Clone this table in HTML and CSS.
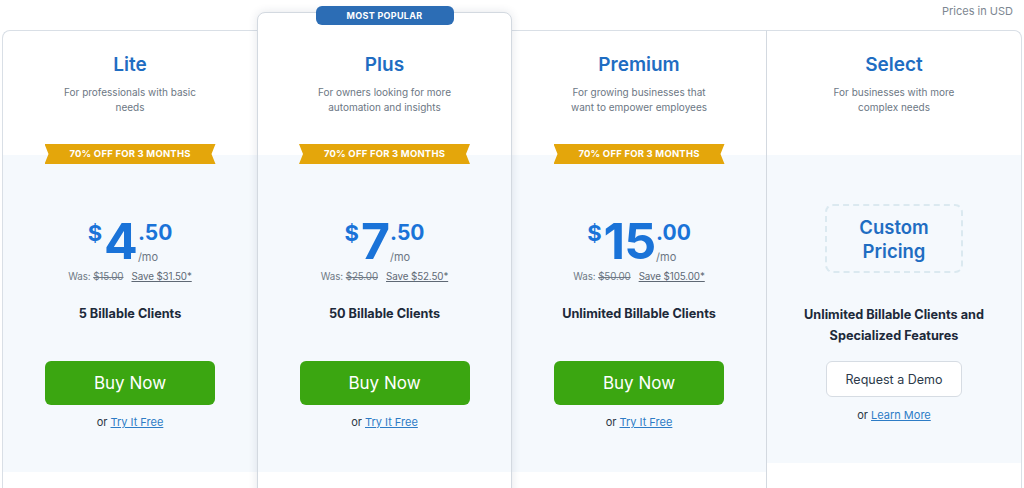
FILE: index.html
```html
<!DOCTYPE html>
<html lang="en">
<head>
<meta charset="utf-8">
<title>Pricing</title>
<link rel="stylesheet" href="styles.css">
</head>
<body>
<div class="page">
  <div class="currency">Prices in USD</div>
  <div class="plans">
    <section class="plan plan-lite">
      <header class="plan-head">
        <h2 class="plan-name">Lite</h2>
        <p class="plan-desc">For professionals with basic<br>needs</p>
      </header>
      <div class="plan-body">
        <div class="ribbon">70% OFF FOR 3 MONTHS</div>
        <div class="price">
          <span class="price-cur">$</span>
          <span class="price-int">4</span>
          <span class="price-side"><span class="price-dec">.50</span><span class="price-per">/mo</span></span>
        </div>
        <div class="was">Was: <s>$15.00</s><span class="save">Save $31.50*</span></div>
        <div class="clients">5 Billable Clients</div>
        <a class="btn-buy" href="#">Buy Now</a>
        <div class="alt">or <a href="#">Try It Free</a></div>
      </div>
      <div class="plan-foot"></div>
    </section>

    <section class="plan plan-popular">
      <div class="badge">MOST POPULAR</div>
      <header class="plan-head">
        <h2 class="plan-name">Plus</h2>
        <p class="plan-desc">For owners looking for more<br>automation and insights</p>
      </header>
      <div class="plan-body">
        <div class="ribbon">70% OFF FOR 3 MONTHS</div>
        <div class="price">
          <span class="price-cur">$</span>
          <span class="price-int">7</span>
          <span class="price-side"><span class="price-dec">.50</span><span class="price-per">/mo</span></span>
        </div>
        <div class="was">Was: <s>$25.00</s><span class="save">Save $52.50*</span></div>
        <div class="clients">50 Billable Clients</div>
        <a class="btn-buy" href="#">Buy Now</a>
        <div class="alt">or <a href="#">Try It Free</a></div>
      </div>
      <div class="plan-foot"></div>
    </section>

    <section class="plan plan-premium">
      <header class="plan-head">
        <h2 class="plan-name">Premium</h2>
        <p class="plan-desc">For growing businesses that<br>want to empower employees</p>
      </header>
      <div class="plan-body">
        <div class="ribbon">70% OFF FOR 3 MONTHS</div>
        <div class="price">
          <span class="price-cur">$</span>
          <span class="price-int">15</span>
          <span class="price-side"><span class="price-dec">.00</span><span class="price-per">/mo</span></span>
        </div>
        <div class="was">Was: <s>$50.00</s><span class="save">Save $105.00*</span></div>
        <div class="clients">Unlimited Billable Clients</div>
        <a class="btn-buy" href="#">Buy Now</a>
        <div class="alt">or <a href="#">Try It Free</a></div>
      </div>
      <div class="plan-foot"></div>
    </section>

    <section class="plan plan-select">
      <header class="plan-head">
        <h2 class="plan-name">Select</h2>
        <p class="plan-desc">For businesses with more<br>complex needs</p>
      </header>
      <div class="plan-body plan-body-select">
        <div class="custom">Custom<br>Pricing</div>
        <div class="features">Unlimited Billable Clients and<br>Specialized Features</div>
        <a class="btn-demo" href="#">Request a Demo</a>
        <div class="alt alt-select">or <a href="#">Learn More</a></div>
      </div>
      <div class="plan-foot"></div>
    </section>
  </div>
</div>
</body>
</html>
```

FILE: styles.css
```css
* { box-sizing: border-box; }

html, body {
  margin: 0;
  height: 488px;
  overflow: hidden;
  background: #fff;
}

body {
  font-family: Inter, "Liberation Sans", sans-serif;
  color: #1f2d3d;
}

.page { padding: 0 2px; }

.currency {
  height: 30px;
  line-height: 22px;
  text-align: right;
  padding-right: 9px;
  font-size: 11px;
  color: #7d8791;
}

.plans {
  display: grid;
  grid-template-columns: repeat(4, 1fr);
}

.plan {
  display: flex;
  flex-direction: column;
  border-top: 1px solid #d9dfe6;
  background: #fff;
}

.plan-lite {
  border-left: 1px solid #d9dfe6;
  border-top-left-radius: 8px;
}

.plan-popular {
  position: relative;
  z-index: 1;
  margin-top: -18px;
  padding-top: 18px;
  border: 1px solid #d3d9e0;
  border-radius: 8px 8px 0 0;
  box-shadow: 0 0 10px rgba(30, 50, 80, 0.12);
}

.plan-premium { border-right: 1px solid #d3d9e0; }

.plan-select {
  border-right: 1px solid #d9dfe6;
  border-top-right-radius: 8px;
}

.badge {
  position: absolute;
  top: -7px;
  left: 0;
  right: 0;
  margin: 0 auto;
  width: 138px;
  height: 19px;
  border-radius: 6px;
  background: #2c6db5;
  color: #fff;
  font-size: 9px;
  font-weight: 700;
  line-height: 19px;
  letter-spacing: 0.3px;
  text-align: center;
}

.plan-head {
  height: 124px;
  padding-top: 22px;
  text-align: center;
}

.plan-name {
  margin: 0;
  font-size: 19px;
  line-height: 24px;
  font-weight: 600;
  color: #1f6dc2;
}

.plan-desc {
  margin: 8px 0 0;
  font-size: 10px;
  line-height: 15px;
  color: #6c7784;
}

.plan-body {
  background: #f5f9fd;
  display: flex;
  flex-direction: column;
  align-items: center;
  padding-bottom: 42px;
}

.plan-body-select { padding-bottom: 40px; }

.ribbon {
  margin-top: -11px;
  width: 171px;
  height: 20px;
  background: #e4a60b;
  color: #fff;
  font-size: 9.5px;
  font-weight: 700;
  line-height: 20px;
  letter-spacing: 0.2px;
  text-align: center;
  clip-path: polygon(0 0, 100% 0, calc(100% - 4px) 50%, 100% 100%, 0 100%, 4px 50%);
}

.price {
  margin-top: 52px;
  height: 50px;
  display: flex;
  align-items: flex-start;
  color: #1a73d8;
  font-weight: 700;
}

.price-cur {
  font-size: 22px;
  line-height: 22px;
  margin-top: 6px;
  margin-right: 2px;
}

.price-int {
  font-size: 50px;
  line-height: 50px;
  letter-spacing: -1px;
}

.price-side {
  display: flex;
  flex-direction: column;
  align-items: flex-start;
  margin-left: 1px;
}

.price-dec {
  font-size: 21px;
  line-height: 21px;
  margin-top: 6px;
}

.price-per {
  margin-top: 7px;
  font-size: 11px;
  line-height: 14px;
  font-weight: 400;
  color: #6c7784;
}

.was {
  margin-top: 4px;
  font-size: 9.8px;
  line-height: 14px;
  letter-spacing: -0.1px;
  color: #6f7985;
}

.save {
  margin-left: 8px;
  text-decoration: underline;
  color: #5f6975;
}

.clients {
  margin-top: 21px;
  font-size: 12.7px;
  line-height: 18px;
  font-weight: 700;
  color: #1d2a3a;
}

.btn-buy {
  margin-top: 38px;
  width: 170px;
  height: 44px;
  border-radius: 6px;
  background: #3ba611;
  color: #fff;
  font-size: 17px;
  font-weight: 400;
  display: flex;
  align-items: center;
  justify-content: center;
  text-decoration: none;
}

.alt {
  margin-top: 9px;
  font-size: 11px;
  line-height: 16px;
  color: #2a3644;
}

.alt a {
  color: #2d7cc6;
  text-decoration: underline;
}

.alt-select { margin-top: 10px; }

.custom {
  margin-top: 49px;
  width: 138px;
  height: 69px;
  border: 2px dashed #dbe9f0;
  border-radius: 8px;
  display: flex;
  align-items: center;
  justify-content: center;
  text-align: center;
  font-size: 18.5px;
  line-height: 24px;
  font-weight: 600;
  color: #1f6dc2;
}

.features {
  margin-top: 30.5px;
  font-size: 12.7px;
  line-height: 21px;
  font-weight: 700;
  text-align: center;
  color: #1d2a3a;
}

.btn-demo {
  margin-top: 15.5px;
  width: 136px;
  height: 36px;
  border: 1px solid #d6dce3;
  border-radius: 6px;
  background: #fff;
  color: #2c3a4a;
  font-size: 12.5px;
  display: flex;
  align-items: center;
  justify-content: center;
  text-decoration: none;
}

.plan-foot {
  flex: 1;
  min-height: 40px;
}
```
